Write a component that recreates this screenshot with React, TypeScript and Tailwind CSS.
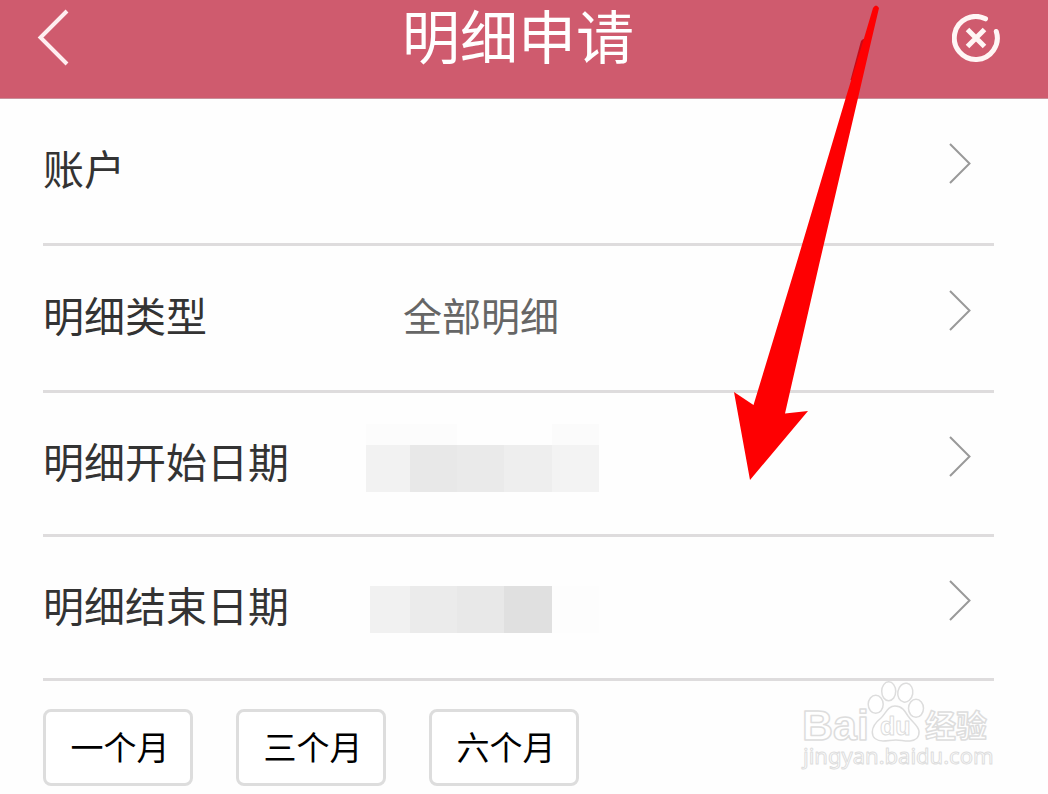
import React from "react";

type RowProps = {
  label: string;
  tall?: boolean;
  children?: React.ReactNode;
};

function Row({ label, tall = false, children }: RowProps) {
  return (
    <li>
      <button
        type="button"
        className={
          "flex w-full items-center border-b-3 border-[#dedcdd] text-left " +
          (tall ? "h-[147px]" : "h-[144px]")
        }
      >
        <span className="w-[323px] shrink-0 pb-2 text-[41px] leading-[60px] text-[#333333]">
          {label}
        </span>
        <span className="flex flex-1 items-center">{children}</span>
        <svg
          className="mr-5 mb-4 h-[46px] w-[28px] shrink-0"
          viewBox="0 0 28 46"
          fill="none"
          stroke="#999999"
          strokeWidth="2"
          aria-hidden="true"
        >
          <path d="M4 4 L23.500 23.500 L4 43" />
        </svg>
      </button>
    </li>
  );
}

function StartDateMask() {
  return (
    <span className="mb-3 flex flex-col">
      <span className="flex h-[21px]">
        <span className="w-[91px] bg-[#fcfcfc]" />
        <span className="w-[95px]" />
        <span className="w-[47px] bg-[#fbfbfb]" />
      </span>
      <span className="flex h-[47px]">
        <span className="w-[44px] bg-[#f2f2f2]" />
        <span className="w-[47px] bg-[#e8e8e8]" />
        <span className="w-[47px] bg-[#eaeaea]" />
        <span className="w-[48px] bg-[#eeeeee]" />
        <span className="w-[47px] bg-[#f3f3f3]" />
      </span>
    </span>
  );
}

function EndDateMask() {
  return (
    <span className="mt-1 ml-1 flex h-[47px]">
      <span className="w-[40px] bg-[#f1f1f1]" />
      <span className="w-[47px] bg-[#ebebeb]" />
      <span className="w-[47px] bg-[#e8e8e8]" />
      <span className="w-[48px] bg-[#e0e0e0]" />
      <span className="w-[47px] bg-[#fdfdfd]" />
    </span>
  );
}

function Watermark() {
  return (
    <svg
      className="pointer-events-none absolute top-[676px] right-[48px] h-[100px] w-[200px]"
      viewBox="0 0 200 100"
      fill="#ffffff"
      stroke="#dddddd"
      strokeWidth="1.5"
      strokeLinejoin="round"
      role="img"
      aria-label="Baidu 经验 jingyan.baidu.com"
    >
      <text x="2" y="64" fontSize="43" fontWeight="700" fontFamily="'Liberation Sans', sans-serif">
        Bai
      </text>
      <path d="M95 30 C88 30 86 37 81 42 C76 46 72.300 50 72.300 56 C72.300 62 77 65 83 65 C88 65 91 64 96 64 C101 64 105 65.500 110 65 C116 64.500 119.500 61 119 55 C118 49 112 46 108 40 C105 35 102 30 95 30 Z" />
      <ellipse cx="75.700" cy="28.300" rx="7.500" ry="9" />
      <ellipse cx="88.700" cy="15.300" rx="7" ry="9.500" />
      <ellipse cx="105.300" cy="16.700" rx="7.500" ry="9.500" transform="rotate(10 105.300 16.700)" />
      <ellipse cx="116" cy="32.300" rx="7.500" ry="9" />
      <text x="80" y="59" fontSize="25" fontWeight="700" fontFamily="'Liberation Sans', sans-serif" strokeWidth="1">
        du
      </text>
      <text x="125" y="61" fontSize="31" fontWeight="700" fontFamily="'Noto Sans CJK SC', sans-serif">
        经验
      </text>
      <text x="3" y="88" fontSize="22" strokeWidth="1" fontFamily="'Noto Sans', sans-serif">
        jingyan.baidu.com
      </text>
    </svg>
  );
}

function PointerArrow() {
  return (
    <svg
      className="pointer-events-none absolute top-0 left-[730px] h-[484px] w-[154px]"
      viewBox="730 0 154 484"
      aria-hidden="true"
    >
      <path d="M861 41 L850.500 80 L860 80 L868 40 Q864 37 861 41 Z" fill="#c80a18" />
      <path
        d="M750 480 L734 392 L753.500 405 L796 265 L845.700 98 L863.500 40 L873 8 Q876 3 879 8 L871 42 L858 98 L819 265 L785 413.500 L808 411 Z"
        fill="#fe0002"
      />
    </svg>
  );
}

const ranges = ["一个月", "三个月", "六个月"];

export default function App() {
  return (
    <div className="relative min-h-screen w-full overflow-hidden bg-[#fefefe] font-['Noto_Sans_CJK_SC',sans-serif]">
      <header className="flex h-[99px] items-center border-b border-[#c98f99] bg-[#cf5b6e] pr-[48px] pb-[22px] pl-[36px] text-white">
        <button type="button" aria-label="返回" className="size-12 shrink-0">
          <svg
            className="-my-1.5 h-[60px] w-[34px]"
            viewBox="0 0 34 60"
            fill="none"
            stroke="#ffeef0"
            strokeWidth="4"
            aria-hidden="true"
          >
            <path d="M31 3 L4.500 29.500 L31 56" />
          </svg>
        </button>
        <h1 className="flex-1 pb-2 text-center text-[58px] leading-[68px] font-normal">明细申请</h1>
        <button type="button" aria-label="关闭" className="size-12 shrink-0">
          <svg
            className="size-12"
            viewBox="0 0 48 48"
            fill="none"
            stroke="#fff6f5"
            strokeWidth="5"
            strokeLinecap="round"
            aria-hidden="true"
          >
            <path d="M33.500 4.800 A21.500 21.500 0 1 0 44.300 17.500" />
            <path d="M15.500 15.500 L32.500 32.500 M32.500 15.500 L15.500 32.500" strokeLinecap="butt" />
          </svg>
        </button>
      </header>

      <main className="pr-[54px] pb-2 pl-[43px]">
        <ul>
          <Row label="账户" tall />
          <Row label="明细类型" tall>
            <span className="pb-2 pl-[37px] text-[39px] leading-[60px] text-[#666666]">全部明细</span>
          </Row>
          <Row label="明细开始日期">
            <StartDateMask />
          </Row>
          <Row label="明细结束日期">
            <EndDateMask />
          </Row>
        </ul>
        <div className="flex gap-[43px] pt-7">
          {ranges.map((range) => (
            <button
              key={range}
              type="button"
              className="h-[77px] w-[150px] rounded-lg border-3 border-[#dddddd] bg-white pb-1 pl-1 text-[33px] leading-[48px] text-black"
            >
              {range}
            </button>
          ))}
        </div>
      </main>

      <Watermark />
      <PointerArrow />
    </div>
  );
}
